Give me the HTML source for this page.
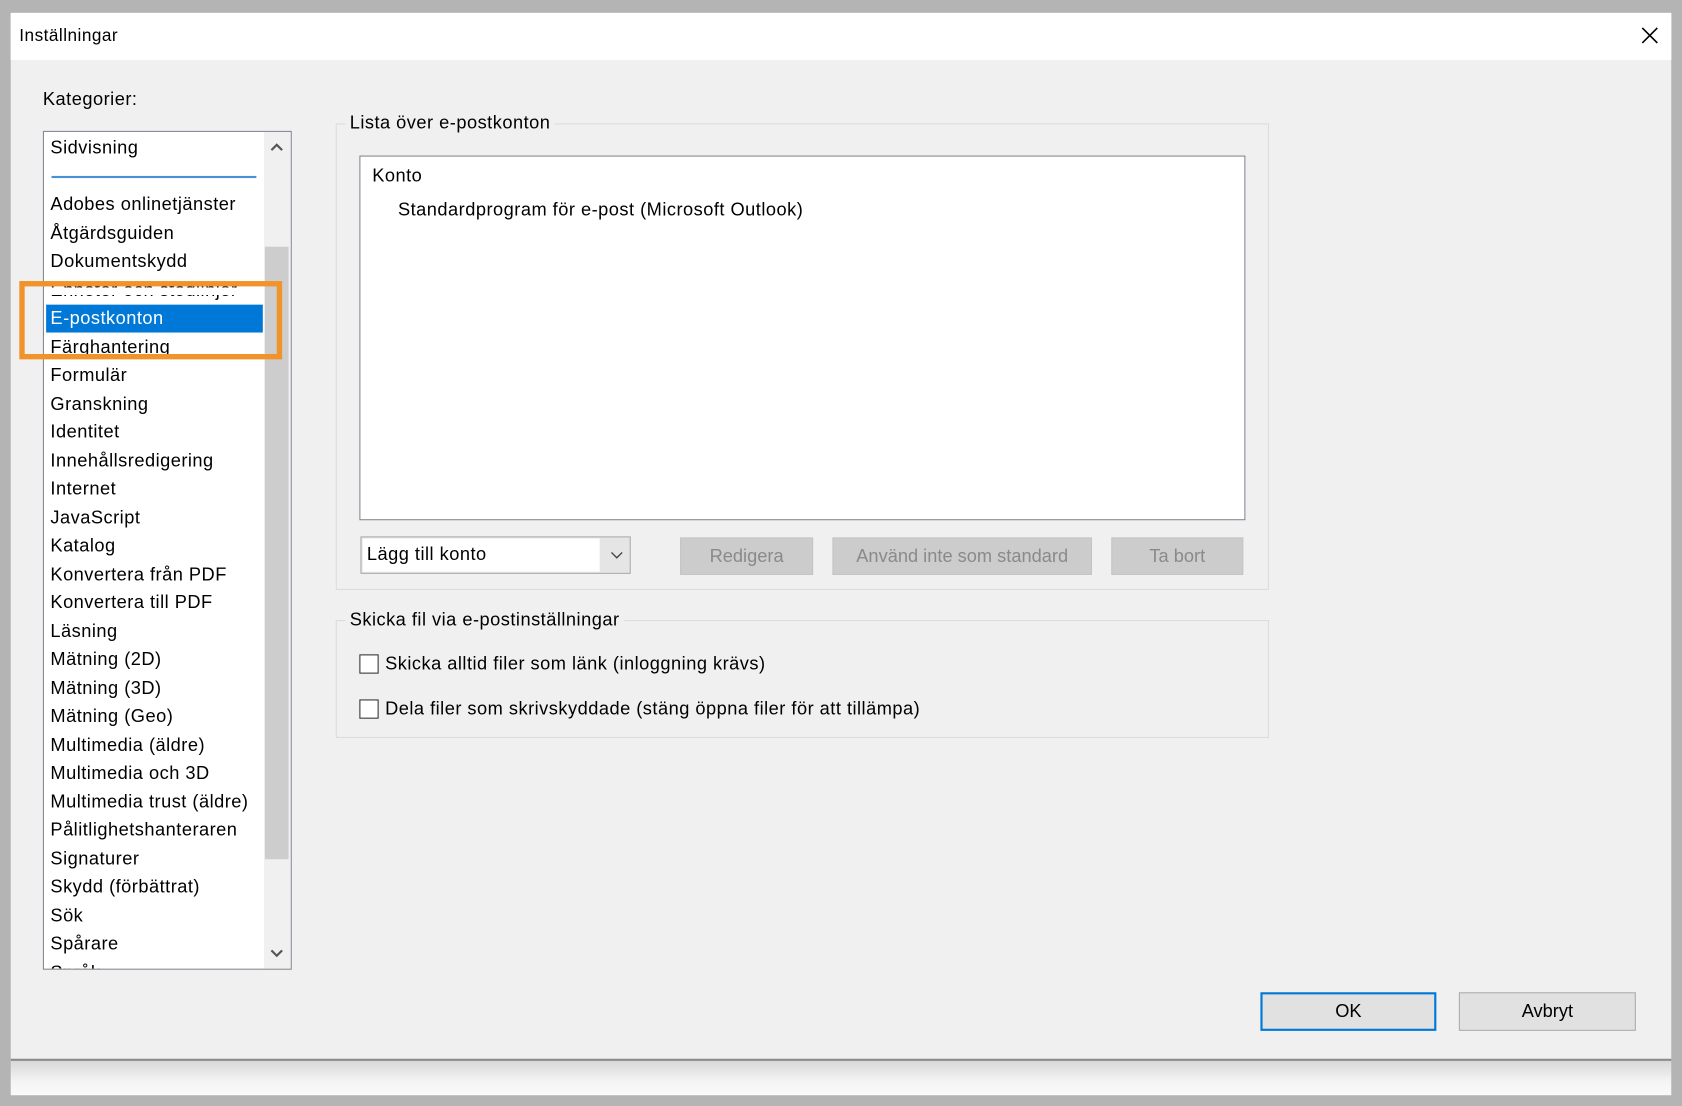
<!DOCTYPE html>
<html><head><meta charset="utf-8"><style>
html,body{margin:0;padding:0;background:#b4b4b4;overflow:hidden;width:1682px;height:1106px}
#s{position:absolute;left:0;top:0;width:1568px;height:1031px;transform:scale(1.0727);transform-origin:0 0;font-family:"Liberation Sans",sans-serif;color:#000;font-size:17px;letter-spacing:0.45px}
.a{position:absolute}
.t{position:absolute;white-space:nowrap;line-height:20px}
.btn{position:absolute;background:#cccccc;border:1px solid #c4c4c4;color:#8a8a8a;text-align:center;line-height:33px;box-sizing:border-box;font-size:17px;letter-spacing:0}
.grp{position:absolute;border:1px solid #dcdcdc;box-sizing:border-box}
.lbl{position:absolute;background:#f0f0f0;padding:0 4px;line-height:20px}
.cb{position:absolute;width:18px;height:18px;border:1px solid #333;background:#fff;box-sizing:border-box}
</style></head><body><div id="s">
<div class="a" style="left:10px;top:12px;width:1548px;height:976px;background:#f0f0f0"></div>
<div class="a" style="left:10px;top:12px;width:1548px;height:44px;background:#fff"></div>
<div class="t" style="left:18px;top:24px;font-size:16px">Inställningar</div>
<svg class="a" style="left:1530px;top:25px" width="16" height="16"><path d="M1 1L15 15M15 1L1 15" stroke="#000" stroke-width="1.5"/></svg>
<div class="a" style="left:10px;top:987px;width:1548px;height:2px;background:#8a8a8a"></div>
<div class="a" style="left:10px;top:989px;width:1548px;height:32px;background:linear-gradient(#d8d8d8,#f4f4f4 60%,#fafafa)"></div>

<div class="t" style="left:40px;top:83px">Kategorier:</div>
<div class="a" style="left:40px;top:122px;width:232px;height:782px;border:1px solid #828790;box-sizing:border-box;background:#fff;overflow:hidden">
 <div class="a" style="left:205px;top:0;width:25px;height:780px;background:#f0f0f0"></div>
 <div class="a" style="left:206px;top:107px;width:22px;height:571px;background:#cdcdcd"></div>
 <svg class="a" style="left:211px;top:10px" width="12" height="8"><path d="M1 7L6 2L11 7" stroke="#555" stroke-width="2" fill="none"/></svg>
 <svg class="a" style="left:211px;top:762px" width="12" height="8"><path d="M1 1L6 6L11 1" stroke="#555" stroke-width="2" fill="none"/></svg>
 <div class="t" style="left:6px;top:5px">Sidvisning</div>
 <div class="a" style="left:7px;top:41px;width:191px;height:2px;background:#4a90d9"></div>
 <div class="a" style="left:2px;top:161px;width:202px;height:26px;background:#0078d7"></div>
 <div style="position:absolute;left:6px;top:55px;line-height:26.5px">
  Adobes onlinetjänster<br>Åtgärdsguiden<br>Dokumentskydd<br>Enheter och stödlinjer<br><span style="color:#fff">E-postkonton</span><br>Färghantering<br>Formulär<br>Granskning<br>Identitet<br>Innehållsredigering<br>Internet<br>JavaScript<br>Katalog<br>Konvertera från PDF<br>Konvertera till PDF<br>Läsning<br>Mätning (2D)<br>Mätning (3D)<br>Mätning (Geo)<br>Multimedia (äldre)<br>Multimedia och 3D<br>Multimedia trust (äldre)<br>Pålitlighetshanteraren<br>Signaturer<br>Skydd (förbättrat)<br>Sök<br>Spårare<br>Språk
 </div>
 <div class="a" style="left:0;top:145px;width:204px;height:7px;background:#fff"></div>
</div>
<div class="a" style="left:18px;top:262px;width:245px;height:73px;border:5px solid #f0932a;box-sizing:border-box"></div>

<div class="grp" style="left:313px;top:115px;width:870px;height:435px"></div>
<div class="lbl" style="left:322px;top:105px">Lista över e-postkonton</div>
<div class="a" style="left:335px;top:145px;width:826px;height:340px;border:1px solid #828790;box-sizing:border-box;background:#fff"></div>
<div class="t" style="left:347px;top:154px">Konto</div>
<div class="t" style="left:371px;top:186px">Standardprogram för e-post (Microsoft Outlook)</div>
<div class="a" style="left:336px;top:500px;width:252px;height:35px;border:1px solid #adadad;box-sizing:border-box;background:#e5e5e5"></div>
<div class="a" style="left:338px;top:502px;width:221px;height:31px;background:#fff"></div>
<div class="t" style="left:342px;top:507px">Lägg till konto</div>
<svg class="a" style="left:569px;top:514px" width="12" height="8"><path d="M1 1L6 6L11 1" stroke="#444" stroke-width="1.3" fill="none"/></svg>
<div class="btn" style="left:634px;top:501px;width:124px;height:35px">Redigera</div>
<div class="btn" style="left:776px;top:501px;width:242px;height:35px">Använd inte som standard</div>
<div class="btn" style="left:1036px;top:501px;width:123px;height:35px">Ta bort</div>

<div class="grp" style="left:313px;top:578px;width:870px;height:110px"></div>
<div class="lbl" style="left:322px;top:568px">Skicka fil via e-postinställningar</div>
<div class="cb" style="left:335px;top:610px"></div>
<div class="t" style="left:359px;top:609px">Skicka alltid filer som länk (inloggning krävs)</div>
<div class="cb" style="left:335px;top:652px"></div>
<div class="t" style="left:359px;top:651px">Dela filer som skrivskyddade (stäng öppna filer för att tillämpa)</div>

<div class="btn" style="left:1175px;top:925px;width:164px;height:36px;background:#e1e1e1;border:2px solid #0078d7;color:#000;line-height:32px">OK</div>
<div class="btn" style="left:1360px;top:925px;width:165px;height:36px;background:#e1e1e1;border:1px solid #adadad;color:#000;line-height:34px">Avbryt</div>
</div></body></html>
